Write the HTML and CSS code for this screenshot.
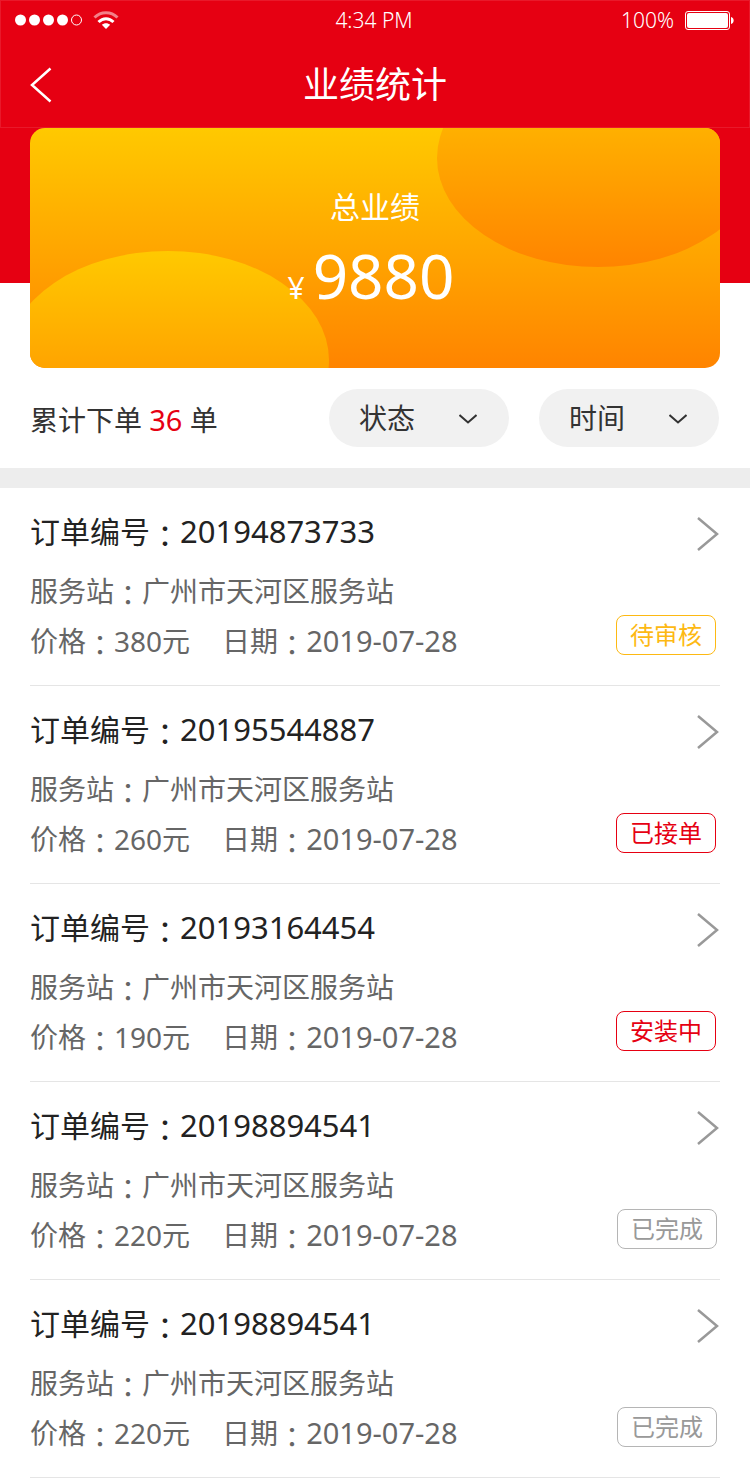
FILE: index.html
```html
<!DOCTYPE html>
<html lang="zh-CN">
<head>
	<meta charset="utf-8"/>
	<meta name="viewport" content="width=device-width, initial-scale=1"/>
	<title>业绩统计</title>
	<link rel="stylesheet" href="styles.css">
</head>
<body>

	<header class="header">
		<div class="top">
			<div class="status-bar">
				<div class="signal">
					<svg width="68" height="12" viewBox="0 0 68 12">
						<g fill="#fff">
							<circle cx="6.500" cy="6" r="5.500"/>
							<circle cx="20.500" cy="6" r="5.500"/>
							<circle cx="34.500" cy="6" r="5.500"/>
							<circle cx="48.500" cy="6" r="5.500"/>
						</g>
						<circle cx="62.500" cy="6" r="5" fill="none" stroke="#fff"/>
					</svg>
					<svg width="26" height="18" viewBox="0 0 26 18" fill="none" stroke="#fff" stroke-width="3">
						<path d="M1.500 6.500C8 0 18 0 24.500 6.500" opacity=".5"/>
						<path d="M5.500 11C10 6.500 16 6.500 20.500 11"/>
						<path d="M13 18L8.800 13.800C11 11.600 15 11.600 17.200 13.800Z" fill="#fff" stroke="none"/>
					</svg>
				</div>
				<div class="time">4:34 PM</div>
				<div class="battery">
					<span>100%</span>
					<svg width="49" height="19" viewBox="0 0 49 19">
						<rect x=".5" y=".5" width="44" height="18" rx="2.500" fill="none" stroke="#fff"/>
						<rect x="2" y="2" width="41" height="15" rx="2" fill="#fff"/>
						<path d="M46 6C49.500 6.500 49.500 12.500 46 13Z" fill="#fff"/>
					</svg>
				</div>
			</div>
			<nav class="nav">
				<a href="#" class="back" aria-label="返回">
					<svg width="22" height="36" viewBox="0 0 22 36" fill="none" stroke="#fff" stroke-width="2.500">
						<path d="M20.500 1.500L2 18L20.500 34.500"/>
					</svg>
				</a>
				<h1>业绩统计</h1>
			</nav>
		</div>
	</header>

	<section class="card">
		<p class="card-label">总业绩</p>
		<p class="card-total"><span class="yen">¥</span>9880</p>
	</section>

	<form class="filter">
		<p class="count">累计下单 <b>36</b> 单</p>
		<div class="select-box">
			<select name="status" aria-label="状态">
				<option>状态</option>
			</select>
			<svg width="18" height="10" viewBox="0 0 18 10" fill="none" stroke="#333" stroke-width="2">
				<path d="M.5 1L9 8.500L17.500 1"/>
			</svg>
		</div>
		<div class="select-box">
			<select name="date" aria-label="时间">
				<option>时间</option>
			</select>
			<svg width="18" height="10" viewBox="0 0 18 10" fill="none" stroke="#333" stroke-width="2">
				<path d="M.5 1L9 8.500L17.500 1"/>
			</svg>
		</div>
	</form>

	<main class="orders">
		<a href="#" class="order">
			<div class="order-info">
				<h2>订单编号<i lang="zh-TW">：</i><span class="number">20194873733</span></h2>
				<p>服务站<i lang="zh-TW">：</i>广州市天河区服务站</p>
				<p class="row"><span>价格<i lang="zh-TW">：</i>380元</span><span>日期<i lang="zh-TW">：</i><time>2019-07-28</time></span></p>
			</div>
			<div class="order-side">
				<svg class="arrow" width="22" height="34" viewBox="0 0 22 34"><path d="M1 1L20 17L1 33"/></svg>
				<span class="tag waiting">待审核</span>
			</div>
		</a>

		<a href="#" class="order">
			<div class="order-info">
				<h2>订单编号<i lang="zh-TW">：</i><span class="number">20195544887</span></h2>
				<p>服务站<i lang="zh-TW">：</i>广州市天河区服务站</p>
				<p class="row"><span>价格<i lang="zh-TW">：</i>260元</span><span>日期<i lang="zh-TW">：</i><time>2019-07-28</time></span></p>
			</div>
			<div class="order-side">
				<svg class="arrow" width="22" height="34" viewBox="0 0 22 34"><path d="M1 1L20 17L1 33"/></svg>
				<span class="tag active">已接单</span>
			</div>
		</a>

		<a href="#" class="order">
			<div class="order-info">
				<h2>订单编号<i lang="zh-TW">：</i><span class="number">20193164454</span></h2>
				<p>服务站<i lang="zh-TW">：</i>广州市天河区服务站</p>
				<p class="row"><span>价格<i lang="zh-TW">：</i>190元</span><span>日期<i lang="zh-TW">：</i><time>2019-07-28</time></span></p>
			</div>
			<div class="order-side">
				<svg class="arrow" width="22" height="34" viewBox="0 0 22 34"><path d="M1 1L20 17L1 33"/></svg>
				<span class="tag active">安装中</span>
			</div>
		</a>

		<a href="#" class="order">
			<div class="order-info">
				<h2>订单编号<i lang="zh-TW">：</i><span class="number">20198894541</span></h2>
				<p>服务站<i lang="zh-TW">：</i>广州市天河区服务站</p>
				<p class="row"><span>价格<i lang="zh-TW">：</i>220元</span><span>日期<i lang="zh-TW">：</i><time>2019-07-28</time></span></p>
			</div>
			<div class="order-side">
				<svg class="arrow" width="22" height="34" viewBox="0 0 22 34"><path d="M1 1L20 17L1 33"/></svg>
				<span class="tag done">已完成</span>
			</div>
		</a>

		<a href="#" class="order">
			<div class="order-info">
				<h2>订单编号<i lang="zh-TW">：</i><span class="number">20198894541</span></h2>
				<p>服务站<i lang="zh-TW">：</i>广州市天河区服务站</p>
				<p class="row"><span>价格<i lang="zh-TW">：</i>220元</span><span>日期<i lang="zh-TW">：</i><time>2019-07-28</time></span></p>
			</div>
			<div class="order-side">
				<svg class="arrow" width="22" height="34" viewBox="0 0 22 34"><path d="M1 1L20 17L1 33"/></svg>
				<span class="tag done">已完成</span>
			</div>
		</a>
	</main>

</body>
</html>
```
FILE: styles.css
```css
* {
    box-sizing: border-box;
}
body {
    margin: 0px;
    background-color: #fff;
    font-family: "Noto Sans", "Noto Sans CJK SC", sans-serif;
    font-size: 28px;
    font-weight: 400;
    color: #333;
}
h1, h2, p {
    margin: 0px;
    font-weight: 400;
}
svg {
    display: block;
}
a {
    color: inherit;
    text-decoration: none;
}

/* header */
.header {
    background-color: #e60012;
    color: #fff;
    padding-bottom: 155px;
}
.top {
    height: 128px;
    border: 1px solid #e9192a;
}
.status-bar {
    display: grid;
    grid-template-columns: 1fr auto 1fr;
    align-items: center;
    height: 38px;
    padding: 0px 15px 0px 13px;
    font-size: 21px;
    font-weight: 300;
}
.signal, .battery {
    display: flex;
    align-items: center;
    gap: 11px;
}
.battery {
    justify-content: flex-end;
}
.nav {
    display: grid;
    grid-template-columns: 60px 1fr 60px;
    align-items: center;
    height: 91px;
}
.back {
    padding-left: 29px;
}
.nav h1 {
    font-size: 36px;
    line-height: 50px;
    text-align: center;
}

/* total card */
.card {
    position: relative;
    overflow: hidden;
    height: 240px;
    margin: -155px 30px 0px;
    padding-top: 56px;
    border-radius: 15px;
    background: linear-gradient(#ffc900, #ff8400);
    color: #fff;
    text-align: center;
}
.card::before, .card::after {
    content: "";
    position: absolute;
    width: 322px;
    height: 218px;
    border-radius: 50%;
    background: linear-gradient(#ffc900, #ff8400);
}
.card::before {
    left: -23px;
    top: 123px;
}
.card::after {
    right: -39px;
    top: -79px;
}
.card p {
    position: relative;
    z-index: 1;
}
.card-label {
    font-size: 30px;
    line-height: 46px;
}
.card-total {
    font-size: 62px;
    line-height: 90px;
    padding-right: 8px;
}
.yen {
    font-size: 30px;
    margin-right: 8px;
}

/* filters */
.filter {
    display: flex;
    align-items: center;
    gap: 30px;
    height: 120px;
    padding: 0px 31px 0px 30px;
    border-bottom: 20px solid #ededed;
}
.count {
    flex: 1;
    padding-top: 2px;
}
.count b {
    font-size: 29px;
    font-weight: 400;
    line-height: 1;
    color: #e60012;
}
.select-box {
    position: relative;
}
.select-box select {
    appearance: none;
    display: block;
    width: 180px;
    height: 58px;
    padding: 0px 30px;
    border: 0px;
    border-radius: 29px;
    background-color: #f1f1f1;
    color: #333;
    font: inherit;
    cursor: pointer;
}
.select-box svg {
    position: absolute;
    right: 32px;
    top: 25px;
    pointer-events: none;
}

/* order list */
.orders {
    padding: 0px 30px;
}
.order {
    display: flex;
    justify-content: space-between;
    padding: 19px 0px;
    border-bottom: 1px solid #e5e5e5;
    color: #666;
    line-height: 50px;
}
.order h2 {
    margin-bottom: 9px;
    font-size: 30px;
    color: #222;
}
.order i {
    font-family: "Noto Sans CJK TC", sans-serif;
    font-style: normal;
    line-height: 1;
    vertical-align: -4px;
}
.number {
    font-size: 31px;
    line-height: 1;
}
.order time {
    font-size: 29px;
    line-height: 1;
}
.row {
    display: flex;
    gap: 32px;
}
.order-side {
    display: flex;
    flex-direction: column;
    justify-content: space-between;
    align-items: flex-end;
    padding: 10px 1px 11px 0px;
}
.arrow {
    fill: none;
    stroke: #999;
    stroke-width: 2.5;
}
.tag {
    width: 100px;
    margin-right: 3px;
    border: 1px solid;
    border-radius: 8px;
    font-size: 24px;
    line-height: 38px;
    text-align: center;
}
.waiting {color: #fdb913;}
.active {color: #e60012;}
.done {margin-right: 2px; color: #999; border-color: #b5b5b5;}
```
